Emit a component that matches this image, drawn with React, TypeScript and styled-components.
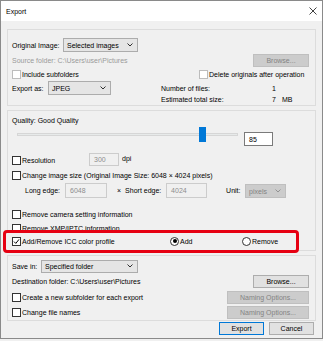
import React from "react"
import styled, { createGlobalStyle } from "styled-components"

const GlobalStyle = createGlobalStyle`
  html, body {
    margin: 0;
    padding: 0;
    background: #f0f0f0;
  }
  body {
    font-family: "Liberation Sans", Arial, sans-serif;
    font-size: 7px;
    color: #000;
  }
`

const Window = styled.div`
  width: 323px;
  height: 339px;
  box-sizing: border-box;
  border: 1px solid #8a8a8a;
  background: #f0f0f0;
  display: flex;
  flex-direction: column;
`

const TitleBar = styled.div`
  height: 20px;
  flex-shrink: 0;
  background: #fff;
  display: flex;
  align-items: center;
  justify-content: space-between;
  padding: 0 5px 0 5px;
`

const Body = styled.div`
  display: flex;
  flex-direction: column;
  padding: 8px 6px 0 6px;
`

const Group = styled.div<{ $mt?: number; $pb?: number }>`
  margin-top: ${(p) => p.$mt || 0}px;
  border: 1px solid #dcdcdc;
  padding: 0 6px ${(p) => p.$pb || 0}px 4px;
  display: flex;
  flex-direction: column;
`

const Row = styled.div<{ $h: number; $mt?: number; $align?: string }>`
  position: relative;
  display: flex;
  align-items: ${(p) => p.$align || "center"};
  height: ${(p) => p.$h}px;
  margin-top: ${(p) => p.$mt || 0}px;
  white-space: nowrap;
`

const Cell = styled.div<{ $w?: number; $ml?: number }>`
  display: flex;
  align-items: center;
  width: ${(p) => (p.$w ? `${p.$w}px` : "auto")};
  margin-left: ${(p) => p.$ml || 0}px;
  flex-shrink: 0;
`

const Spacer = styled.div`
  flex: 1;
`

const Label = styled.span<{ $muted?: boolean; $ml?: number }>`
  color: ${(p) => (p.$muted ? "#9a9a9a" : "#000")};
  margin-left: ${(p) => p.$ml || 0}px;
  line-height: 9px;
`

const Select = styled.div<{ $w: number; $disabled?: boolean; $ml?: number }>`
  width: ${(p) => p.$w}px;
  height: 14px;
  box-sizing: border-box;
  margin-left: ${(p) => p.$ml || 0}px;
  background: ${(p) => (p.$disabled ? "#cccccc" : "#e5e5e5")};
  border: 1px solid ${(p) => (p.$disabled ? "#bfbfbf" : "#acacac")};
  color: ${(p) => (p.$disabled ? "#838383" : "#000")};
  display: flex;
  align-items: center;
  justify-content: space-between;
  padding: 0 4px 0 3px;
  flex-shrink: 0;
`

const Input = styled.div<{ $w: number; $h: number; $disabled?: boolean; $ml?: number; $mt?: number }>`
  width: ${(p) => p.$w}px;
  height: ${(p) => p.$h}px;
  box-sizing: border-box;
  margin-left: ${(p) => p.$ml || 0}px;
  margin-top: ${(p) => p.$mt || 0}px;
  background: ${(p) => (p.$disabled ? "#f0f0f0" : "#fff")};
  border: 1px solid ${(p) => (p.$disabled ? "#cccccc" : "#7a7a7a")};
  color: ${(p) => (p.$disabled ? "#8d8d8d" : "#000")};
  display: flex;
  align-items: center;
  padding-left: 4px;
  flex-shrink: 0;
`

const Button = styled.div<{ $w: number; $disabled?: boolean; $primary?: boolean }>`
  width: ${(p) => p.$w}px;
  height: 13px;
  box-sizing: border-box;
  background: ${(p) => (p.$disabled ? "#cccccc" : "#e1e1e1")};
  border: 1px solid
    ${(p) => (p.$primary ? "#0078d7" : p.$disabled ? "#bfbfbf" : "#adadad")};
  color: ${(p) => (p.$disabled ? "#838383" : "#000")};
  display: flex;
  align-items: center;
  justify-content: center;
  flex-shrink: 0;
`

const Box = styled.div<{ $disabled?: boolean }>`
  width: 9px;
  height: 9px;
  box-sizing: border-box;
  border: 1px solid ${(p) => (p.$disabled ? "#bcbcbc" : "#333")};
  background: #fff;
  display: flex;
  align-items: center;
  justify-content: center;
  margin-right: 1px;
  flex-shrink: 0;
`

const Radio = styled.div`
  width: 9px;
  height: 9px;
  box-sizing: border-box;
  border: 1px solid #333;
  border-radius: 50%;
  background: #fff;
  display: flex;
  align-items: center;
  justify-content: center;
  margin-right: 1px;
  flex-shrink: 0;
`

const Dot = styled.div`
  width: 4px;
  height: 4px;
  border-radius: 50%;
  background: #000;
`

const SliderTrack = styled.div`
  position: relative;
  width: 221px;
  height: 15px;
  margin-left: 5px;
  flex-shrink: 0;
  &::before {
    content: "";
    position: absolute;
    left: 0;
    right: 0;
    top: 6px;
    height: 3px;
    background: #e7eaea;
    border: 1px solid #d6d6d6;
    box-sizing: border-box;
  }
`

const Thumb = styled.div`
  position: absolute;
  top: 0;
  width: 7px;
  height: 15px;
  background: #0078d7;
`

const Highlight = styled.div`
  position: absolute;
  top: -6px;
  bottom: -7px;
  left: -9px;
  right: 10px;
  border: 3px solid #e60012;
  border-radius: 4px;
  background: #f0f0f0;
  z-index: 0;
`

const Front = styled.div`
  position: relative;
  z-index: 1;
  display: flex;
  align-items: center;
`

const ButtonBar = styled.div`
  display: flex;
  justify-content: flex-end;
  gap: 5px;
  margin-top: 1px;
  padding-right: 2px;
`

const Chevron = () => (
  <svg width="6" height="4" viewBox="0 0 6 4">
    <path d="M0.5 0.5 L3 3 L5.5 0.5" fill="none" stroke="currentColor" strokeWidth="0.8" />
  </svg>
)

const Check = ({ label, checked, disabled, w }: { label: string; checked?: boolean; disabled?: boolean; w?: number }) => (
  <Cell $w={w}>
    <Box $disabled={disabled}>
      {checked && (
        <svg width="7" height="7" viewBox="0 0 7 7">
          <path d="M1 3.6 L2.8 5.4 L6 1.4" fill="none" stroke="#000" strokeWidth="1" />
        </svg>
      )}
    </Box>
    <Label>{label}</Label>
  </Cell>
)

export default function App() {
  const quality = 85
  return (
    <>
      <GlobalStyle />
      <Window>
        <TitleBar>
          <span>Export</span>
          <svg width="8" height="8" viewBox="0 0 8 8">
            <path d="M0.5 0.5 L7.5 7.5 M7.5 0.5 L0.5 7.5" stroke="#111" strokeWidth="0.8" />
          </svg>
        </TitleBar>
        <Body>
          <Group $pb={1}>
            <Row $h={14} $mt={8}>
              <Cell $w={51}>
                <Label>Original Image:</Label>
              </Cell>
              <Select $w={75}>
                <span>Selected images</span>
                <Chevron />
              </Select>
            </Row>
            <Row $h={13} $mt={2}>
              <Label $muted>Source folder: C:\Users\user\Pictures</Label>
              <Spacer />
              <Button $w={56} $disabled>
                Browse...
              </Button>
            </Row>
            <Row $h={10} $mt={2}>
              <Check label="Include subfolders" disabled w={187} />
              <Check label="Delete originals after operation" disabled />
            </Row>
            <Row $h={14} $mt={2}>
              <Cell $w={36}>
                <Label>Export as:</Label>
              </Cell>
              <Select $w={63}>
                <span>JPEG</span>
                <Chevron />
              </Select>
              <Cell $ml={50} $w={111}>
                <Label>Number of files:</Label>
              </Cell>
              <Label>1</Label>
            </Row>
            <Row $h={9}>
              <Cell $ml={149} $w={111}>
                <Label>Estimated total size:</Label>
              </Cell>
              <Label>7</Label>
              <Label $ml={6}>MB</Label>
            </Row>
          </Group>

          <Group $mt={4} $pb={4}>
            <Row $h={10} $mt={4}>
              <Label>Quality: Good Quality</Label>
            </Row>
            <Row $h={19} $mt={2} $align="flex-start">
              <SliderTrack>
                <Thumb style={{ left: Math.round((221 - 7) * (quality / 100)) }} />
              </SliderTrack>
              <Input $w={29} $h={14} $ml={6} $mt={5}>
                {quality}
              </Input>
            </Row>
            <Row $h={14} $mt={7} $align="flex-start">
              <Cell $w={77} style={{ height: 14 }}>
                <Box />
                <Label>Resolution</Label>
              </Cell>
              <Input $w={30} $h={13} $disabled>
                300
              </Input>
              <Label $ml={3} style={{ marginTop: 1 }}>
                dpi
              </Label>
            </Row>
            <Row $h={10} $mt={3}>
              <Check label="Change image size (Original Image Size: 6048 × 4024 pixels)" />
            </Row>
            <Row $h={16} $mt={2}>
              <Cell $ml={13} $w={40}>
                <Label>Long edge:</Label>
              </Cell>
              <Input $w={42} $h={15} $disabled>
                6048
              </Input>
              <Label $ml={10}>×</Label>
              <Cell $ml={4} $w={41}>
                <Label>Short edge:</Label>
              </Cell>
              <Input $w={41} $h={15} $disabled>
                4024
              </Input>
              <Cell $ml={19} $w={19}>
                <Label>Unit:</Label>
              </Cell>
              <Select $w={41} $disabled style={{ marginTop: 2 }}>
                <span>pixels</span>
                <Chevron />
              </Select>
            </Row>
            <Row $h={10} $mt={11}>
              <Check label="Remove camera setting information" />
            </Row>
            <Row $h={10} $mt={4}>
              <Check label="Remove XMP/IPTC information" />
            </Row>
            <Row $h={10} $mt={3}>
              <Highlight />
              <Front>
                <Check label="Add/Remove ICC color profile" checked w={158} />
                <Cell $w={72}>
                  <Radio>
                    <Dot />
                  </Radio>
                  <Label>Add</Label>
                </Cell>
                <Cell>
                  <Radio />
                  <Label>Remove</Label>
                </Cell>
              </Front>
            </Row>
          </Group>

          <Group $mt={4} $pb={1}>
            <Row $h={12} $mt={4}>
              <Cell $w={29}>
                <Label>Save in:</Label>
              </Cell>
              <Select $w={97} style={{ height: 13 }}>
                <span>Specified folder</span>
                <Chevron />
              </Select>
            </Row>
            <Row $h={14} $mt={2}>
              <Label>Destination folder: C:\Users\user\Pictures</Label>
              <Spacer />
              <Button $w={56}>Browse...</Button>
            </Row>
            <Row $h={14} $mt={2}>
              <Check label="Create a new subfolder for each export" />
              <Spacer />
              <Button $w={82} $disabled>
                Naming Options...
              </Button>
            </Row>
            <Row $h={13} $mt={2}>
              <Check label="Change file names" />
              <Spacer />
              <Button $w={82} $disabled>
                Naming Options...
              </Button>
            </Row>
          </Group>

          <ButtonBar>
            <Button $w={45} $primary>
              Export
            </Button>
            <Button $w={45}>Cancel</Button>
          </ButtonBar>
        </Body>
      </Window>
    </>
  )
}
